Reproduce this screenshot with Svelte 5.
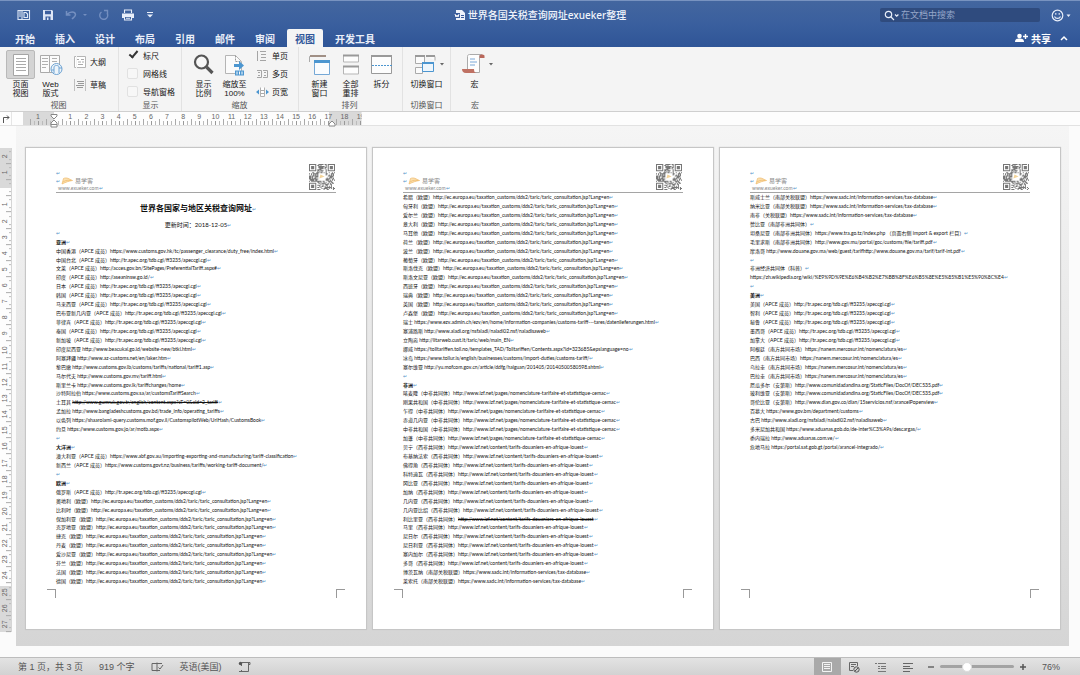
<script>
  const tabs = ['开始', '插入', '设计', '布局', '引用', '邮件', '审阅', '视图', '开发工具'];
  let active = $state('视图');
  let zoom = $state(76);

  const APCE = 'APCE 成员';
  const apec = 'http://tr.apec.org/tdb.cgi/ff3235/apeccgi.cgi';
  const eu = 'http://ec.europa.eu/taxation_customs/dds2/taric/taric_consultation.jsp?Lang=en';
  const cemac = 'http://www.izf.net/pages/nomenclature-tarifaire-et-statistique-cemac';
  const uemoa = 'http://www.izf.net/content/tarifs-douaniers-en-afrique-louest';
  const sadc = 'https://www.sadc.int/information-services/tax-database';
  const merc = 'https://nanem.mercosur.int/nomenclatura/es';

  const row = (name, url = '', group = '', struck = false) => ({ name, url, group, struck });
  const head = (name) => ({ name, heading: true });
  const blank = { name: '' };
  const many = (names, group, url) => names.split(' ').map((n) => row(n, url, group));

  const pages = [
    {
      title: true,
      rows: [
        blank,
        head('亚洲'),
        row('中国香港', 'https://www.customs.gov.hk/tc/passenger_clearance/duty_free/index.html', APCE),
        row('中国台北', apec, APCE),
        row('文莱', 'http://acces.gov.bn/SitePages/PreferentialTariff.aspx#', APCE),
        row('印度', 'http://aseaninsw.go.id/', APCE),
        ...many('日本 韩国 马来西亚 巴布亚新几内亚 菲律宾 泰国 新加坡', APCE, apec),
        row('印度尼西亚', 'http://www.beacukai.go.id/website-new/btki.html'),
        row('阿塞拜疆', 'http://www.az-customs.net/en/laker.htm'),
        row('黎巴嫩', 'http://www.customs.gov.lb/customs/tariffs/national/tariff1.asp'),
        row('马尔代夫', 'http://www.customs.gov.mv/tariff.html'),
        row('斯里兰卡', 'http://www.customs.gov.lk/tariffchanges/home'),
        row('沙特阿拉伯', 'https://www.customs.gov.sa/ar/customsTariffSearch'),
        row('土耳其', 'http://www.gumruk.gov.tr/english/content.aspx?cT=0&cId=2_tariff', '', true),
        row('孟加拉', 'http://www.bangladeshcustoms.gov.bd/trade_info/operating_tariffs'),
        row('以色列', 'https://shaarolami-query.customs.mof.gov.il/CustomspilotWeb/UriHash/CustomsBook'),
        row('约旦', 'https://www.customs.gov.jo/ar/motb.aspx'),
        blank,
        head('大洋洲'),
        row('澳大利亚', 'https://www.abf.gov.au/importing-exporting-and-manufacturing/tariff-classification', APCE),
        row('新西兰', 'https://www.customs.govt.nz/business/tariffs/working-tariff-document/', APCE),
        blank,
        head('欧洲'),
        row('俄罗斯', apec, APCE),
        ...many('奥地利 比利时 保加利亚 克罗地亚 捷克 丹麦 爱沙尼亚 芬兰 法国 德国', '欧盟', eu)
      ]
    },
    {
      rows: [
        ...many('希腊 匈牙利 爱尔兰 意大利 马耳他 荷兰 波兰 葡萄牙 斯洛伐克 斯洛文尼亚 西班牙 瑞典 英国 卢森堡', '欧盟', eu),
        row('瑞士', 'https://www.ezv.admin.ch/ezv/en/home/information-companies/customs-tariff---tares/datenlieferungen.html'),
        row('塞浦路斯', 'http://www.aladi.org/nsfaladi/naladi02.nsf/naladisaweb'),
        row('立陶宛', 'http://litarweb.cust.lt/taric/web/main_EN'),
        row('挪威', 'https://tolltariffen.toll.no/templates_TAD/Tolltariffen/Contents.aspx?id=323685&epslanguage=no'),
        row('冰岛', 'https://www.tollur.is/english/businesses/customs/import-duties/customs-tariff/'),
        row('塞尔维亚', 'http://yu.mofcom.gov.cn/article/ddfg/haiguan/201405/20140500580598.shtml'),
        blank,
        head('非洲'),
        ...many('喀麦隆 刚果共和国 乍得 赤道几内亚 中非共和国 加蓬', '中非共同体', cemac),
        ...many('贝宁 布基纳法索 佛得角 科特迪瓦 冈比亚 加纳 几内亚 几内亚比绍', '西非共同体', uemoa),
        row('利比里亚', uemoa, '西非共同体', true),
        ...many('马里 尼日尔 尼日利亚 塞内加尔 多哥', '西非共同体', uemoa),
        ...many('博茨瓦纳 莱索托', '南部关税联盟', sadc)
      ]
    },
    {
      rows: [
        ...many('斯威士兰 纳米比亚', '南部关税联盟', sadc),
        row('南非', sadc, '关税联盟'),
        row('赞比亚', '', '南部非洲共同体'),
        row('坦桑尼亚', 'https://www.tra.go.tz/index.php （页面右侧 import & export 栏目）', '南部非洲共同体'),
        row('毛里求斯', 'http://www.gov.mu/portal/goc/customs/file/tariff.pdf', '南部非洲共同体'),
        row('摩洛哥', 'http://www.douane.gov.ma/web/guest/tarifhttp://www.douane.gov.ma/tarif/tarif-int.pdf'),
        blank,
        row('非洲经济共同体', '', '科普'),
        row('', 'https://zh.wikipedia.org/wiki/%E9%9D%9E%E6%B4%B2%E7%BB%8F%E6%B5%8E%E5%85%B1%E5%90%8C%E4'),
        blank,
        head('美洲'),
        ...many('美国 智利 秘鲁 墨西哥 加拿大', APCE, apec),
        ...many('阿根廷 巴西 乌拉圭 巴拉圭', '南方共同市场', merc),
        ...many('厄瓜多尔 玻利维亚', '安第斯', 'http://www.comunidadandina.org/StaticFiles/DocOf/DEC535.pdf'),
        row('哥伦比亚', 'http://www.dian.gov.co/dian/15servicios.nsf/arancelPopenview', '安第斯'),
        row('百慕大', 'https://www.gov.bm/department/customs'),
        row('古巴', 'http://www.aladi.org/nsfaladi/naladi02.nsf/naladisaweb'),
        row('多米尼加共和国', 'https://www.aduanas.gob.do/de-inter%C3%A9s/descargas/'),
        row('委内瑞拉', 'http://www.aduanas.com.ve/'),
        row('危地马拉', 'https://portal.sat.gob.gt/portal/arancel-integrado/')
      ]
    }
  ];

  // Modules of the header's QR code: three finder squares and a scattered body.
  const N = 25;
  const finder = (x, y) => {
    for (const [fx, fy] of [[0, 0], [N - 7, 0], [0, N - 7]]) {
      const a = x - fx, b = y - fy;
      if (a >= -1 && a <= 7 && b >= -1 && b <= 7) {
        const d = Math.max(Math.abs(a - 3), Math.abs(b - 3));
        return d === 3 || d <= 1 ? 1 : 0;
      }
    }
    return -1;
  };
  let seed = 77;
  let qr = '';
  for (let y = 0; y < N; y++)
    for (let x = 0; x < N; x++) {
      seed = (seed * 16807) % 2147483647;
      const f = finder(x, y);
      const mid = Math.abs(x - 12) < 4 && Math.abs(y - 12) < 4;
      if (f === 1 || (f < 0 && !mid && seed / 2147483647 > 0.46)) qr += `M${x} ${y}h1v1h-1z`;
    }

  const across = ['1', '', ...Array.from({ length: 19 }, (_, i) => i + 1)];
  const down = ['2', '1', '', ...Array.from({ length: 27 }, (_, i) => i + 1)];
</script>

<div class="app">
  <header class="top">
    <div class="titlebar">
      <div class="quick">
        <button aria-label="侧栏"><svg width="14" height="12" viewBox="0 0 14 12"><path d="M1 1.5h4v9H1zM5 1.5h7.5v9H5zM7 3.5v5h3.5V5L9 3.5z" fill="none" stroke="#dfe7f6" stroke-width="1.1" /><path d="M2 3h2M2 5h2M2 7h2" stroke="#dfe7f6" /></svg></button>
        <button aria-label="保存"><svg width="12" height="12" viewBox="0 0 12 12"><path d="M1 1h9l1 1v9H1z" fill="#dfe7f6" /><path d="M3 1.8h6v3.4H3zM3.5 7.5h5V11h-5z" fill="#3d5f9e" /><path d="M5 8.5h1.5V11H5z" fill="#dfe7f6" /></svg></button>
        <button aria-label="撤销" class="dim"><svg width="22" height="12" viewBox="0 0 22 12"><path d="M1.5 2v4h4M2 5.5C5 2 10 2 10.5 5.5 10.5 7.5 9 8 7 10" fill="none" stroke="#8ba2cf" stroke-width="1.5" /><path d="M18 5h4l-2 2z" fill="#8ba2cf" /></svg></button>
        <button aria-label="重做" class="dim"><svg width="12" height="12" viewBox="0 0 12 12"><path d="M3.5 3A4 4 0 1 0 9 4M6 1.5h3.5V5" fill="none" stroke="#8ba2cf" stroke-width="1.4" /></svg></button>
        <button aria-label="打印"><svg width="14" height="12" viewBox="0 0 14 12"><path d="M1 4.5h12v4.5h-2V7H3v2H1z" fill="#e8eef9" /><path d="M3.5 4V1h7v3M3.5 7.5h7V11h-7zM5 9.2h4" fill="none" stroke="#e8eef9" stroke-width="1.1" /></svg></button>
        <button aria-label="自定义快速访问工具栏"><svg width="8" height="8" viewBox="0 0 8 8"><path d="M1 1.5h6" stroke="#e8eef9" /><path d="M1 3.5h6L4 6.5z" fill="#e8eef9" /></svg></button>
      </div>
      <h1 class="doc-name"><svg width="11" height="12" viewBox="0 0 11 12"><path d="M2 1h6l3 3v7H2z" fill="#eef2fa" /><path d="M0 4h6v5H0z" fill="#3a5c9c" /><path d="M1 5l1 3 1-2 1 2 1-3" fill="none" stroke="#fff" /><path d="M7 6.5h3M7 8.5h3" stroke="#3a5c9c" /></svg>世界各国关税查询网址exueker整理</h1>
      <div class="right">
        <label class="search">
          <svg width="17" height="11" viewBox="0 0 17 11"><circle cx="4.5" cy="4.5" r="3.2" fill="none" stroke="#e8eef9" stroke-width="1.2" /><path d="M7 7l3 3M11 4.5l1.7 1.7L14.4 4.5" fill="none" stroke="#e8eef9" stroke-width="1.2" /></svg>
          <input type="text" placeholder="在文档中搜索" aria-label="在文档中搜索" />
        </label>
        <button aria-label="反馈"><svg width="20" height="13" viewBox="0 0 20 13"><circle cx="6.5" cy="6.5" r="5.3" fill="none" stroke="#e8eef9" stroke-width="1.2" /><path d="M3.5 7.5c1 2.5 5 2.5 6 0M4.8 4v1.7M8.2 4v1.7" fill="none" stroke="#e8eef9" stroke-width="1.1" /><path d="M15.5 5.5h4L17.5 8z" fill="#e8eef9" /></svg></button>
      </div>
    </div>
    <div class="tabbar">
      <nav>
        {#each tabs as t}
          <button class:on={active === t} onclick={() => (active = t)}>{t}</button>
        {/each}
      </nav>
      <div class="share">
        <button><svg width="13" height="10" viewBox="0 0 13 10"><circle cx="4.5" cy="3" r="2.3" fill="#fff" /><path d="M0 9c0-3 2-3.5 4.5-3.5S9 6 9 9z" fill="#fff" /><path d="M10.5 1v5M8 3.5h5" stroke="#fff" stroke-width="1.4" /></svg>共享</button>
        <button aria-label="折叠功能区"><svg width="8" height="6" viewBox="0 0 8 6"><path d="M1 5l3-3 3 3" fill="none" stroke="#fff" stroke-width="1.5" /></svg></button>
      </div>
    </div>
  </header>

  <section class="ribbon">
    <div class="group views">
      <div class="tools">
        <button class="big pressed"><svg width="20" height="24" viewBox="0 0 20 24"><path d="M2.5 1.5h15v21h-15z" fill="#fff" stroke="#a5a5a5" /><path d="M5 5.5h10M5 8.5h10M5 11.5h10M5 14.5h10M5 17.5h10" stroke="#aaa" /></svg><span>页面<br />视图</span></button>
        <button class="big"><svg width="24" height="24" viewBox="0 0 24 24"><path d="M1.5 2.5h9v17h-9zM10.5 2.5h10v17h-10z" fill="#fbfbfb" stroke="#aaa" /><path d="M3 5.5h6M3 8.5h6M3 11.5h6M3 14.5h4M13 5.5h5M13 8.5h5" stroke="#b0b0b0" /><circle cx="17.5" cy="16" r="5.5" fill="#eef5fb" stroke="#6ea3d2" /><path d="M15 20v-6c0-2 5-2 5 0v6M12.500 17H15M20 15h3" fill="none" stroke="#6ea3d2" /></svg><span>Web<br />版式</span></button>
        <div class="stack two">
          <button><svg width="14" height="14" viewBox="0 0 14 14"><path d="M3 1.5H1.5v11H3M4 1.5h8.5v11H4" fill="#fff" stroke="#b5b5b5" /><path d="M4 4.5h2M8 4.5h3M5 7h3M9 7h2M5 9.5h5" stroke="#aaa" /></svg>大纲</button>
          <button><svg width="14" height="14" viewBox="0 0 14 14"><path d="M1.5 1v12M12.5 1v12" stroke="#c0c0c0" /><path d="M4 3.5h7M5 5.5h6M3 7.5h8M4 9.5h6" stroke="#999" /></svg>草稿</button>
        </div>
      </div>
      <h2>视图</h2>
    </div>
    <div class="group show">
      <div class="tools">
        <div class="stack three">
          <label><input type="checkbox" checked />标尺</label>
          <label><input type="checkbox" />网格线</label>
          <label><input type="checkbox" />导航窗格</label>
        </div>
      </div>
      <h2>显示</h2>
    </div>
    <div class="group zooming">
      <div class="tools">
        <button class="big"><svg width="24" height="24" viewBox="0 0 24 24"><circle cx="9.5" cy="9" r="6.5" fill="#f7f7f7" stroke="#555" stroke-width="2.2" /><path d="M14.5 14l6 6" stroke="#555" stroke-width="3.2" /></svg><span>显示<br />比例</span></button>
        <button class="big"><svg width="24" height="24" viewBox="0 0 24 24"><path d="M2.500 2.500h10l6 6v12h-16z" fill="#fbfbfb" stroke="#b5b5b5" /><path d="M12.500 2.500v6h6" fill="none" stroke="#999" stroke-dasharray="2 1" /><path d="M11 11h5V8l5 4.500-5 4.500v-3h-5z" fill="#4c96d0" /><path d="M12 17.500h9v5h-9z" fill="#4c96d0" /><path d="M14 18.500v3M16.500 18.500v3M19 18.500v3" stroke="#fff" /></svg><span>缩放至<br />100%</span></button>
        <div class="stack three">
          <button><svg width="13" height="12" viewBox="0 0 13 12"><path d="M1.5 1v10M4 1.5h6M5 4.5h5M5 7.5h5M4 10.5h6" stroke="#a5a5a5" /></svg>单页</button>
          <button><svg width="13" height="12" viewBox="0 0 13 12"><path d="M1 2.5h4.5v7H1M7 2.5h4.5v7H7M2 4.5h2M2 7.5h2M8 4.5h2M8 7.5h2" fill="none" stroke="#a5a5a5" /></svg>多页</button>
          <button><svg width="13" height="12" viewBox="0 0 13 12"><path d="M4.5 1.5v9h4v-9" fill="#fff" stroke="#b0b0b0" /><path d="M5 4.5h3M5 7.5h3" stroke="#aaa" /><path d="M3 3.5v5L0 6zM10 3.5v5L13 6z" fill="#4c96d0" /></svg>页宽</button>
        </div>
      </div>
      <h2>缩放</h2>
    </div>
    <div class="group arrange">
      <div class="tools">
        <button class="big"><svg width="24" height="24" viewBox="0 0 24 24"><path d="M1.5 9V3.5h15" fill="none" stroke="#aaa" /><path d="M2 3h16" stroke="#a08f85" stroke-width="2" /><path d="M6.5 7.5h15v14h-15z" fill="#fafcfe" stroke="#75a8d6" /><path d="M6 8.5h16" stroke="#4c96d0" stroke-width="3" /></svg><span>新建<br />窗口</span></button>
        <button class="big"><svg width="24" height="24" viewBox="0 0 24 24"><path d="M4.5 3v6h15V3M4.5 14v7h15v-7" fill="#fdfdfd" stroke="#b5b5b5" /><path d="M4 2.5h16M4 13.5h16" stroke="#999" stroke-width="2" /></svg><span>全部<br />重排</span></button>
        <button class="big"><svg width="24" height="24" viewBox="0 0 24 24"><path d="M1.5 2.5h20v18h-20z" fill="#fdfdfd" stroke="#999" /><path d="M1 3h21" stroke="#999" stroke-width="2" /><path d="M2 12.5h20" stroke="#4c96d0" stroke-dasharray="2 1" /></svg><span>拆分</span></button>
      </div>
      <h2>排列</h2>
    </div>
    <div class="group switch">
      <div class="tools">
        <button class="big"><svg width="32" height="24" viewBox="0 0 32 24"><path d="M2.5 3.5h9v7h-9zM2.5 14.5h7v6h-7zM14 3.5h8v4" fill="#fbfbfb" stroke="#aaa" /><path d="M2 3h10M13 3h9" stroke="#999" stroke-width="2" /><path d="M9.5 9.500h11v9h-11z" fill="#eef6fc" stroke="#4c96d0" /><path d="M9 10h12" stroke="#4c96d0" stroke-width="2" /><path d="M27 10h4l-2 2.5z" fill="#666" /></svg><span>切换窗口</span></button>
      </div>
      <h2>切换窗口</h2>
    </div>
    <div class="group macro">
      <div class="tools">
        <button class="big"><svg width="32" height="24" viewBox="0 0 32 24"><path d="M6.5 16V3.5c0-1.5 1-2 2-2h12c-2 0-2 2-2 3v15h-6" fill="#fdfdfd" stroke="#aaa" /><path d="M18.5 5V3c0-2 5-2 5 0v2z" fill="#b9675a" /><path d="M1 16h12c0 3 1 4 3 4H5c-3 0-4-2-4-4z" fill="#bf7163" /><path d="M9 6h5M9 9h7M9 12h5" stroke="#7aa8d8" /><path d="M28 10h4l-2 2.5z" fill="#666" /></svg><span>宏</span></button>
      </div>
      <h2>宏</h2>
    </div>
  </section>

  <div class="hruler">
    <span class="tabstop"><svg width="8" height="8" viewBox="0 0 8 8"><path d="M1.5 8V2.5H7M5 .5l2 2-2 2" fill="none" stroke="#555" /></svg></span>
    <div class="scale">
      {#each across as n}<span>{n}</span>{/each}
      <svg class="indent" width="8" height="14" viewBox="0 0 8 14"><path d="M1 .5h6v1.5L4 5 1 2zM4 6l3 3v4H1V9zM1 10.5h6" fill="#fff" stroke="#888" /></svg>
      <svg class="indent end" width="8" height="14" viewBox="0 0 8 14"><path d="M4 7l3 3v2H1v-2z" fill="#fff" stroke="#888" /></svg>
    </div>
  </div>

  <main class="work">
    <div class="vruler">
      {#each down as n}<span>{n}</span>{/each}
    </div>
    <div class="canvas">
      {#each pages as page}
        <article class="page">
          <div class="head">
            <div class="brand">
              <i>↵</i>
              <div class="logo"><i>↵</i><svg width="12" height="8" viewBox="0 0 12 8"><path d="M1 7L2.5 1.5C6 0 8 2 11.5 3.5 8 4 5 5 1 7z" fill="#fbe0b0" stroke="#efb967" stroke-width=".7" /><path d="M2 5c3-2 5-2 8-1.5" fill="none" stroke="#efb967" stroke-width=".7" /></svg>易学客</div>
              <div class="site">www.exueker.com<i>↵</i></div>
            </div>
            <svg class="qr" viewBox="0 0 25 25"><path d={qr} fill="#777" /><path d="M10 14l1-4 4 2z" fill="#f3d49a" /></svg>
          </div>
          <div class="body">
            {#if page.title}
              <h3>世界各国家与地区关税查询网址<i>↵</i></h3>
              <p class="date">更新时间：2018-12-05<i>↵</i></p>
            {/if}
            {#each page.rows as r}
              <p class:heading={r.heading}>{r.name}{#if r.group}（{r.group}）{:else if r.url && r.name}{' '}{/if}{#if r.struck}<s>{r.url}</s>{:else}{r.url}{/if}<i>↵</i></p>
            {/each}
          </div>
          <div class="foot"><span></span><span></span></div>
        </article>
      {/each}
    </div>
    <div class="scroll"></div>
  </main>

  <footer class="status">
    <span>第 1 页，共 3 页</span>
    <span>919 个字</span>
    <button aria-label="拼写检查"><svg width="13" height="12" viewBox="0 0 13 12"><path d="M6 2.5H1v7h5M6 1.5v9M6 2.5h5M6 9.5h3M7.5 6.5l1.5 1.5 3-4" fill="none" stroke="#666" /></svg></button>
    <span>英语(美国)</span>
    <button aria-label="宏录制"><svg width="13" height="12" viewBox="0 0 13 12"><path d="M3.5 5V1.5h7V10.5H3.5V9M1 10.5h7M10 1.5h2v2h-2" fill="none" stroke="#666" /><circle cx="2.5" cy="2.5" r="1.7" fill="#555" /></svg></button>
    <div class="modes">
      <button class="on" aria-label="页面视图"><svg width="12" height="12" viewBox="0 0 12 12"><path d="M1.5 1.5h9v9h-9zM3 3.5h6M3 5.5h6M3 7.5h6" fill="none" stroke="#f4f4f4" /></svg></button>
      <button aria-label="Web 版式"><svg width="12" height="12" viewBox="0 0 12 12"><path d="M5 9.5H1.5v-8h8V5M3 3.5h5M3 5.5h3" fill="none" stroke="#666" /><circle cx="8.5" cy="8.5" r="2.7" fill="#ccc" stroke="#555" /><path d="M7 10l3-3" stroke="#555" /></svg></button>
      <button aria-label="大纲"><svg width="12" height="12" viewBox="0 0 12 12"><path d="M0 2.5h2M3 2.5h8M3 5.5h2M6 5.5h5M3 7.5h2M6 7.5h5M3 10.5h8" stroke="#777" /></svg></button>
      <button aria-label="草稿"><svg width="12" height="12" viewBox="0 0 12 12"><path d="M1 2.5h10M1 5.5h7M1 7.5h10M1 10.5h7" stroke="#666" /></svg></button>
    </div>
    <div class="zoomer">
      <button aria-label="缩小"><svg width="8" height="8" viewBox="0 0 8 8"><path d="M1 4h6" stroke="#666" stroke-width="1.5" /></svg></button>
      <input type="range" min="10" max="204" bind:value={zoom} aria-label="显示比例" />
      <button aria-label="放大"><svg width="8" height="8" viewBox="0 0 8 8"><path d="M1 4h6M4 1v6" stroke="#555" stroke-width="1.5" /></svg></button>
      <output>{zoom}%</output>
    </div>
  </footer>
</div>

<style>
  :global(body) {
    margin: 0;
    background: #f4f4f4;
  }
  .app {
    min-height: 100vh;
    display: flex;
    flex-direction: column;
    font-family: 'Liberation Sans', 'Noto Sans CJK SC', sans-serif;
    font-size: 8px;
    color: #151515;
  }
  svg {
    display: block;
    flex: none;
  }
  button {
    font: inherit;
    color: inherit;
    background: none;
    border: 0;
    padding: 0;
    display: flex;
    align-items: center;
  }
  h1, h2, h3, p {
    margin: 0;
    font-weight: 400;
  }

  .top {
    background: linear-gradient(#43669f, #3a5f9e 50%, #2f5597);
    border-top: 1px solid #7893c0;
    color: #fff;
  }
  .titlebar {
    height: 28px;
    display: grid;
    grid-template-columns: 1fr auto 1fr;
    align-items: center;
  }
  .quick {
    display: flex;
    align-items: center;
    gap: 11px;
    padding-left: 17px;
  }
  .dim {
    opacity: 0.7;
  }
  .doc-name {
    display: flex;
    align-items: center;
    gap: 3px;
    font-family: 'Noto Sans', 'Noto Sans CJK SC', sans-serif;
    font-size: 10px;
    line-height: 14px;
    font-weight: 500;
    color: #f0f4fb;
  }
  .right {
    display: flex;
    justify-content: flex-end;
    align-items: center;
    gap: 11px;
    padding-right: 9px;
  }
  .search {
    display: flex;
    align-items: center;
    width: 156px;
    height: 14px;
    padding-left: 4px;
    background: #2f4b7e;
    border-radius: 2px;
  }
  .search input {
    flex: 1;
    min-width: 0;
    border: 0;
    padding: 0;
    outline: 0;
    background: none;
    color: #fff;
    font: inherit;
    font-size: 9px;
  }
  .search input::placeholder {
    color: #95a6c8;
  }
  .tabbar {
    display: flex;
    justify-content: space-between;
    height: 18px;
    padding: 0 12px 0 5px;
    font-size: 10px;
    font-weight: 700;
  }
  nav, .share {
    display: flex;
  }
  nav button {
    margin: 0 2px;
    padding: 0 8px;
    color: #e9eef8;
  }
  nav .on {
    background: #f5f5f5;
    color: #31579a;
    border-radius: 2px 2px 0 0;
  }
  .share {
    gap: 9px;
  }
  .share button {
    gap: 3px;
  }

  .ribbon {
    display: flex;
    height: 65px;
    background: #f4f4f4;
    border-bottom: 1px solid #cfcfcf;
    box-sizing: border-box;
  }
  .group {
    display: flex;
    flex-direction: column;
    box-sizing: border-box;
    border-right: 1px solid #e2e2e2;
    padding-top: 2px;
  }
  .views { width: 119px; padding-left: 6px; }
  .show { width: 63px; padding-left: 8px; }
  .zooming { width: 117px; padding-left: 6px; }
  .arrange { width: 104px; padding-left: 5px; }
  .switch { width: 48px; }
  .macro { width: 48px; border: 0; }
  .views h2, .show h2, .zooming h2, .arrange h2 {
    padding-right: 7px;
  }
  .tools {
    display: flex;
    flex: 1;
  }
  .group h2 {
    font-size: 8px;
    line-height: 11px;
    text-align: center;
    color: #555;
  }
  .big {
    flex-direction: column;
    align-self: flex-start;
    width: 31px;
    text-align: center;
    line-height: 9px;
  }
  .big svg {
    margin: 4px 0 3px;
  }
  .pressed {
    width: 29px;
    position: relative;
    z-index: 0;
  }
  .pressed::before {
    content: '';
    position: absolute;
    z-index: -1;
    inset: 1px 0 auto;
    box-sizing: border-box;
    height: 29px;
    background: #d4d4d4;
    border: 1px solid #b9b9b9;
    border-radius: 2px;
  }
  .switch .big,
  .macro .big {
    width: 47px;
  }
  .switch .big svg,
  .macro .big svg {
    margin-left: 4px;
  }
  .stack {
    display: flex;
    flex-direction: column;
  }
  .stack button,
  .stack label {
    display: flex;
    align-items: center;
    gap: 3px;
    flex: none;
    white-space: nowrap;
  }
  .two {
    padding: 5px 0 0 7px;
    gap: 8px;
  }
  .three {
    gap: 5px;
    padding-left: 2px;
  }
  .two button {
    height: 15px;
  }
  .three button,
  .three label {
    height: 13px;
  }
  .zooming .three {
    padding-left: 6px;
  }
  .show .three {
    padding-left: 0;
  }
  .stack input {
    appearance: none;
    width: 11px;
    height: 11px;
    margin: 0 2px 0 0;
    border: 1px solid #e1e1e1;
    border-radius: 2px;
    background: #f7f7f7;
  }
  .stack input:checked {
    border-color: transparent;
    background: none;
  }
  .stack input:checked::before {
    content: '';
    display: block;
    width: 3px;
    height: 7px;
    margin: -2px 0 0 3px;
    border: solid #333;
    border-width: 0 2px 2px 0;
    transform: rotate(40deg);
  }

  .hruler {
    display: flex;
    height: 13px;
    background: #fdfdfd;
    border-bottom: 1px solid #e2e2e2;
    color: #666;
  }
  .tabstop {
    box-sizing: border-box;
    width: 12px;
    padding: 3px 0 0 2px;
    margin-right: 11px;
    border-right: 1px solid #e5e5e5;
  }
  .scale {
    position: relative;
    display: grid;
    grid-template-columns: repeat(21, 1fr);
    box-sizing: border-box;
    width: 32%;
    padding-left: 7px;
    margin-right: auto;
    font-size: 7px;
    line-height: 9px;
    text-align: center;
    background: linear-gradient(90deg, #d9d9d9 31px, #fdfdfd 31px 306px, #d9d9d9 306px);
    clip-path: inset(0 7px -4px 0);
  }
  .scale span {
    background:
      linear-gradient(#aaa, #aaa) 0 100% / 1px 6px no-repeat,
      linear-gradient(#bbb, #bbb) 4px 100% / 1px 4px no-repeat,
      linear-gradient(#999, #999) 8px 100% / 1px 4px no-repeat,
      linear-gradient(#bbb, #bbb) 12px 100% / 1px 4px no-repeat;
  }
  .indent {
    position: absolute;
    left: 27px;
    top: 2px;
  }
  .end {
    left: 305px;
  }

  .work {
    flex: 1;
    display: flex;
    background: #fbfbfb;
  }
  .vruler {
    flex: none;
    box-sizing: border-box;
    width: 12px;
    display: grid;
    grid-template-rows: repeat(30, 1fr);
    margin: 22px 0 25px;
    border-right: 1px solid #d5d5d5;
    font-size: 7px;
    color: #666;
    background: linear-gradient(#d9d9d9 40px, #fdfdfd 40px 438px, #d9d9d9 438px);
  }
  .vruler span {
    writing-mode: vertical-rl;
    transform: rotate(180deg);
    text-align: center;
    line-height: 10px;
    background:
      linear-gradient(#aaa, #aaa) 0 0 / 5px 1px no-repeat,
      linear-gradient(#bbb, #bbb) 0 4px / 2px 1px no-repeat,
      linear-gradient(#bbb, #bbb) 0 12px / 2px 1px no-repeat;
  }
  .canvas {
    flex: 1;
    min-width: 0;
    display: grid;
    grid-template-columns: repeat(3, minmax(0, 1fr));
    align-items: start;
    gap: 7px;
    padding: 22px 9px 17px 10px;
    margin: 0 0 11px 4px;
    background: linear-gradient(#f5f5f5, #d5d5d5);
  }
  .page {
    aspect-ratio: 340 / 481;
    box-sizing: border-box;
    display: flex;
    flex-direction: column;
    padding: 16px 30px 31px;
    background: #fff;
    box-shadow: 0 0 1px 1px #c6c6c6;
    font-family: Lato, 'Noto Sans CJK SC', sans-serif;
    font-size: 5px;
    color: #111;
  }
  .head {
    display: flex;
    justify-content: space-between;
    height: 28px;
    border-bottom: 1px solid #a5a5a5;
    color: #888;
  }
  .brand {
    display: flex;
    flex-direction: column;
    justify-content: flex-end;
    line-height: 7px;
  }
  .logo {
    display: flex;
    align-items: center;
    line-height: 8px;
    gap: 2px;
    font-size: 6px;
  }
  .logo svg {
    margin-left: -1px;
  }
  .site {
    padding-left: 2px;
    font-size: 5px;
  }
  .qr {
    width: 26px;
    height: 26px;
    margin-right: 1px;
  }
  i {
    font-style: normal;
    font-weight: 400;
    font-size: 5px;
    color: #4f93c8;
  }
  .body {
    flex: 1;
    min-height: 0;
    display: grid;
    grid-template-rows: repeat(44, minmax(0, 1fr));
    white-space: nowrap;
  }
  .body p {
    line-height: 9px;
  }
  .body .heading {
    font-weight: 700;
  }
  .body h3 {
    grid-row: span 3;
    align-self: center;
    padding: 5px 0 0 4px;
    font-size: 8px;
    line-height: 12px;
    font-weight: 700;
    text-align: center;
  }
  .body .date {
    padding-left: 4px;
    font-size: 6px;
    text-align: center;
  }
  .foot {
    display: flex;
    justify-content: space-between;
    margin: 3px -9px 0;
  }
  .foot span {
    width: 8px;
    height: 8px;
    border: solid #999;
    border-width: 1px 1px 0 0;
  }
  .foot span + span {
    border-width: 1px 0 0 1px;
  }
  .scroll {
    width: 11px;
    background: #fbfbfb;
  }

  .status {
    display: flex;
    align-items: center;
    height: 18px;
    box-sizing: border-box;
    border-top: 1px solid #bdbdbd;
    background: linear-gradient(#e3e3e3, #d2d2d2);
    padding: 0 20px 0 18px;
    gap: 16px;
    font-size: 9px;
    color: #555;
  }
  .modes {
    display: flex;
    align-self: stretch;
    margin-left: auto;
  }
  .modes button {
    width: 27px;
    justify-content: center;
  }
  .modes .on {
    background: #a9a9a9;
  }
  .zoomer {
    display: flex;
    align-items: center;
    gap: 5px;
    margin-left: -11px;
  }
  .zoomer input {
    appearance: none;
    width: 74px;
    height: 3px;
    margin: 0;
    border-radius: 2px;
    background: #a3a3a3;
  }
  .zoomer input::-webkit-slider-thumb {
    appearance: none;
    width: 10px;
    height: 10px;
    border-radius: 50%;
    background: #fff;
    border: 1px solid #ddd;
  }
  .zoomer output {
    margin-left: 10px;
  }
</style>
